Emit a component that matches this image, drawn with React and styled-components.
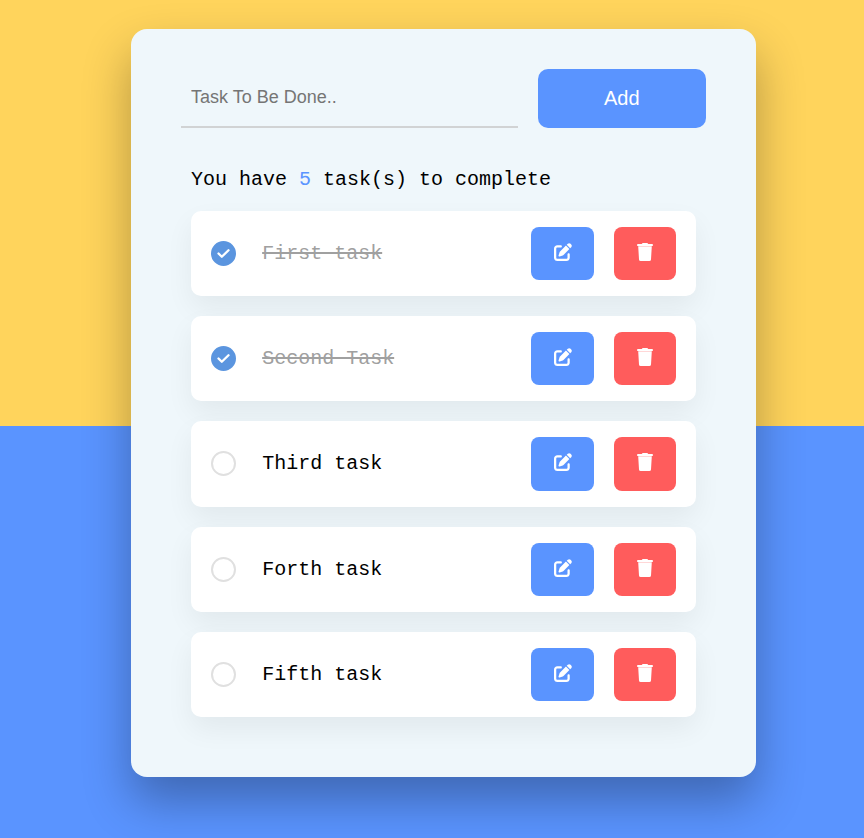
import React, { useState } from "react";
import styled, { createGlobalStyle } from "styled-components";
import { FaPenToSquare } from "react-icons/fa6";

const GlobalStyle = createGlobalStyle`
  * {
    box-sizing: border-box;
    margin: 0;
    padding: 0;
  }
  body {
    min-height: 100vh;
    background: linear-gradient(
      to bottom,
      #ffd45c calc(50vh + 7px),
      #5a94ff calc(50vh + 7px)
    ) no-repeat;
    background-color: #5a94ff;
  }
`;

const Page = styled.main`
  padding: 29px 108px 61px 131px;
`;

const Card = styled.section`
  padding: 40px 50px 60px;
  background: #eff7fb;
  border-radius: 16px;
  box-shadow: 0 24px 48px rgba(0, 0, 0, 0.3);
`;

const NewTaskForm = styled.form`
  display: grid;
  grid-template-columns: 2fr 1fr;
  gap: 20px;
`;

const TaskInput = styled.input`
  min-width: 0;
  height: 59px;
  padding: 0 10px;
  border: none;
  border-bottom: 2px solid #d1d3d4;
  background: transparent;
  color: #111;
  font: 18px "Liberation Sans", Arial, sans-serif;
  outline: none;

  &::placeholder {
    color: #757575;
    opacity: 1;
  }
`;

const AddButton = styled.button`
  border: none;
  border-radius: 10px;
  background: #5a94ff;
  color: #fff;
  font: 20px "Liberation Sans", Arial, sans-serif;
  cursor: pointer;
`;

const Tasks = styled.div`
  padding: 40px 10px 0;
  font: 20px/23px "Courier New", "Liberation Mono", monospace;
  color: #000;
`;

const Count = styled.span`
  color: #5a94ff;
`;

const TaskList = styled.ul`
  display: grid;
  grid-auto-rows: 1fr;
  gap: 20px;
  min-height: 506px;
  margin-top: 20px;
  list-style: none;
`;

const TaskRow = styled.li`
  display: grid;
  grid-template-columns: 1fr 8fr 2fr 2fr;
  gap: 20px;
  padding: 16px 20px;
  background: #fff;
  border-radius: 10px;
  box-shadow: 0 12px 28px rgba(0, 0, 0, 0.06);
`;

const CheckCell = styled.div`
  display: grid;
  grid-template-areas: "mark";
  align-content: center;
  justify-content: start;
`;

const CheckBox = styled.input`
  grid-area: mark;
  appearance: none;
  width: 25px;
  height: 25px;
  border: 2px solid #e0e0e0;
  border-radius: 50%;
  background: #fff;
  cursor: pointer;

  &:checked {
    border-color: #5b95df;
    background: #5b95df;
  }
`;

const CheckMark = styled.svg`
  grid-area: mark;
  place-self: center;
  width: 13px;
  height: 11px;
  pointer-events: none;
`;

const TaskName = styled.label`
  align-self: center;
  white-space: nowrap;
  color: ${({ $done }) => ($done ? "#a0a0a0" : "#000")};
  text-decoration: ${({ $done }) => ($done ? "line-through 2px" : "none")};
`;

const ActionButton = styled.button`
  display: flex;
  align-items: center;
  justify-content: center;
  padding-bottom: 3px;
  border: none;
  border-radius: 8px;
  background: ${({ $danger }) => ($danger ? "#ff5c5c" : "#5a94ff")};
  color: #fff;
  cursor: pointer;

  svg {
    display: block;
    flex: none;
  }
`;

const initialTasks = [
  { id: "first", name: "First task", done: true },
  { id: "second", name: "Second Task", done: true },
  { id: "third", name: "Third task", done: false },
  { id: "forth", name: "Forth task", done: false },
  { id: "fifth", name: "Fifth task", done: false },
];

function TrashIcon() {
  return (
    <svg width="16" height="18" viewBox="0 0 16 18" aria-hidden="true">
      <path
        fill="currentColor"
        d="M5.8 0h4.4q.5 0 .7.4l.3.6H15a1 1 0 0 1 1 1v.2a.8.8 0 0 1-.8.8H.8a.8.8 0 0 1-.8-.8V2a1 1 0 0 1 1-1h3.800l.3-.6Q5.300 0 5.800 0z"
      />
      <path
        fill="currentColor"
        d="M1.200 3.200h13.600L14 16.400A1.700 1.700 0 0 1 12.300 18H3.700A1.700 1.700 0 0 1 2 16.400z"
      />
    </svg>
  );
}

function Task({ task, onToggle, onRemove }) {
  return (
    <TaskRow>
      <CheckCell>
        <CheckBox
          type="checkbox"
          id={task.id}
          checked={task.done}
          onChange={() => onToggle(task.id)}
        />
        {task.done && (
          <CheckMark viewBox="0 0 13 11" aria-hidden="true">
            <path
              d="M1.500 5.500 4.800 8.800 11.500 2.200"
              fill="none"
              stroke="#fff"
              strokeWidth="2.300"
              strokeLinecap="round"
              strokeLinejoin="round"
            />
          </CheckMark>
        )}
      </CheckCell>
      <TaskName htmlFor={task.id} $done={task.done}>
        {task.name}
      </TaskName>
      <ActionButton type="button" aria-label={`Edit ${task.name}`}>
        <FaPenToSquare size={18} />
      </ActionButton>
      <ActionButton
        type="button"
        $danger
        aria-label={`Delete ${task.name}`}
        onClick={() => onRemove(task.id)}
      >
        <TrashIcon />
      </ActionButton>
    </TaskRow>
  );
}

export default function App() {
  const [tasks, setTasks] = useState(initialTasks);
  const [draft, setDraft] = useState("");

  const addTask = (event) => {
    event.preventDefault();
    const name = draft.trim();
    if (!name) return;
    setTasks([...tasks, { id: `task-${Date.now()}`, name, done: false }]);
    setDraft("");
  };
  const toggleTask = (id) =>
    setTasks(tasks.map((t) => (t.id === id ? { ...t, done: !t.done } : t)));
  const removeTask = (id) => setTasks(tasks.filter((t) => t.id !== id));

  return (
    <>
      <GlobalStyle />
      <Page>
        <Card>
          <NewTaskForm onSubmit={addTask}>
            <TaskInput
              type="text"
              aria-label="New task"
              placeholder="Task To Be Done.."
              value={draft}
              onChange={(event) => setDraft(event.target.value)}
            />
            <AddButton type="submit">Add</AddButton>
          </NewTaskForm>
          <Tasks>
            <p>
              You have <Count>{tasks.length}</Count> task(s) to complete
            </p>
            <TaskList>
              {tasks.map((task) => (
                <Task
                  key={task.id}
                  task={task}
                  onToggle={toggleTask}
                  onRemove={removeTask}
                />
              ))}
            </TaskList>
          </Tasks>
        </Card>
      </Page>
    </>
  );
}
